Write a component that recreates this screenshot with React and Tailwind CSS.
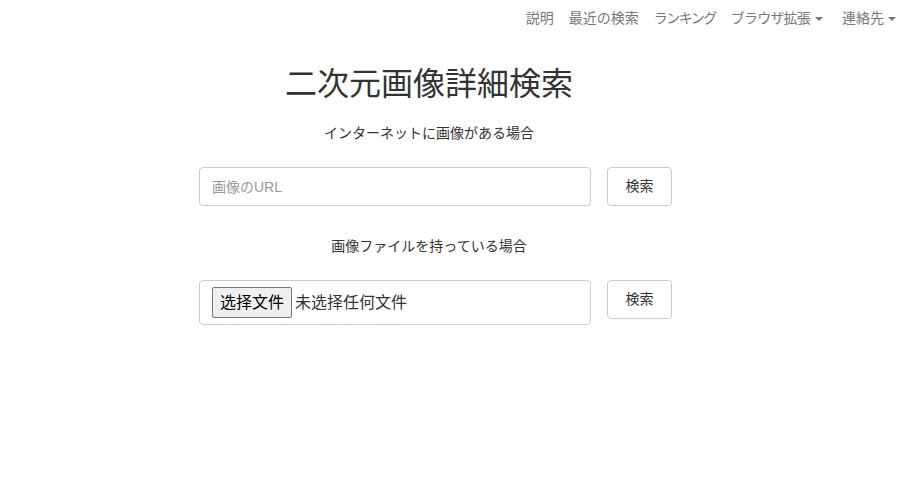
export default function App() {
  const font = { fontFamily: '"Liberation Sans", "Noto Sans CJK JP", sans-serif' };

  return (
    <div className="min-h-screen bg-white text-[#333]" style={font}>
      {/* navbar */}
      <div className="flex justify-end pt-[8px] pr-[21px] text-[14px] leading-5 text-[#777]">
        <div className="flex items-center gap-[15px]">
          <span>説明</span>
          <span>最近の検索</span>
          <span className="tracking-[-1.5px]">ランキング</span>
          <span className="flex items-center">
            <span className="tracking-[-0.8px]">ブラウザ拡張</span>
            <span className="ml-[5px] mt-[2px] border-x-[4px] border-t-[4px] border-x-transparent border-t-[#777]"></span>
          </span>
          <span className="ml-[4px] flex items-center">
            連絡先
            <span className="ml-[4px] mt-[2px] border-x-[4px] border-t-[4px] border-x-transparent border-t-[#777]"></span>
          </span>
        </div>
      </div>

      <div className="ml-[199px] w-[473px]">
        <div className="w-[460px] text-center">
          <h1 className="mt-[36px] text-[32px] leading-10 font-normal">二次元画像詳細検索</h1>
          <p className="mt-[19px] text-[14px] leading-5">インターネットに画像がある場合</p>
        </div>

        <div className="mt-[24px] flex gap-[16px]">
          <input
            type="text"
            placeholder="画像のURL"
            className="h-[39px] w-[392px] rounded border border-[#ccc] px-3 text-[14px] placeholder:text-[#999] outline-none"
          />
          <button className="h-[39px] w-[65px] rounded border border-[#ccc] bg-white text-[14px]">検索</button>
        </div>

        <div className="w-[460px] text-center">
          <p className="mt-[30px] text-[14px] leading-5">画像ファイルを持っている場合</p>
        </div>

        <div className="mt-[24px] flex items-start gap-[16px]">
          <div
            className="flex h-[45px] w-[392px] items-center rounded border border-[#ccc] px-3 text-[16px]"
            style={{ fontFamily: '"Liberation Sans", "Noto Sans CJK SC", sans-serif' }}
          >
            <span className="flex h-[31px] items-center rounded-[2px] border border-[#767676] bg-[#efefef] px-[7px] text-black">
              选择文件
            </span>
            <span className="ml-[3px] text-[#333]">未选择任何文件</span>
          </div>
          <button className="h-[39px] w-[65px] rounded border border-[#ccc] bg-white text-[14px]">検索</button>
        </div>
      </div>
    </div>
  );
}
